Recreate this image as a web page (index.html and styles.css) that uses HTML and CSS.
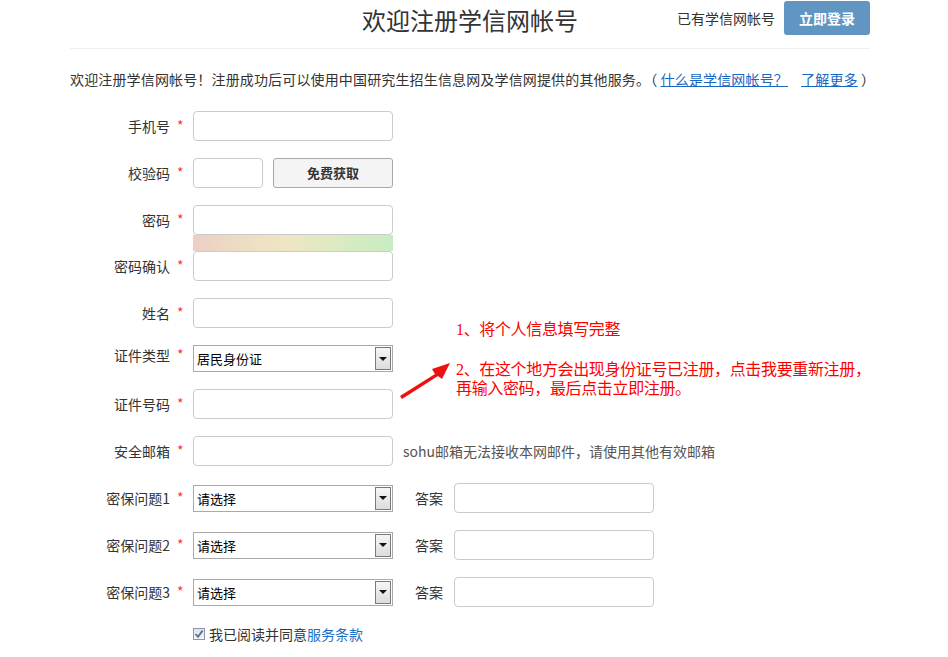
FILE: index.html
```html
<!DOCTYPE html>
<html lang="zh-CN">
<head>
<meta charset="utf-8">
<title>欢迎注册学信网帐号</title>
<link rel="stylesheet" href="styles.css">
</head>
<body>
<div class="page">
  <header class="header">
    <div></div>
    <h1 class="title">欢迎注册学信网帐号</h1>
    <div class="login">
      <span class="has-account">已有学信网帐号</span>
      <a class="login-btn" href="#">立即登录</a>
    </div>
  </header>

  <p class="intro">欢迎注册学信网帐号！注册成功后可以使用中国研究生招生信息网及学信网提供的其他服务。（ <a href="#">什么是学信网帐号？</a>&nbsp;&nbsp;&nbsp; <a href="#">了解更多</a> ）</p>

  <form class="form">
    <div class="row">
      <label class="lbl">手机号</label><span class="star">*</span>
      <span class="input"></span>
    </div>
    <div class="row">
      <label class="lbl">校验码</label><span class="star">*</span>
      <span class="input input-short"></span>
      <span class="btn-code">免费获取</span>
    </div>
    <div class="row row-pwd">
      <label class="lbl">密码</label><span class="star">*</span>
      <span class="input"></span>
    </div>
    <div class="strength-row"><span class="strength"></span></div>
    <div class="row">
      <label class="lbl">密码确认</label><span class="star">*</span>
      <span class="input"></span>
    </div>
    <div class="row">
      <label class="lbl">姓名</label><span class="star">*</span>
      <span class="input"></span>
    </div>
    <div class="row row-select">
      <label class="lbl">证件类型</label><span class="star">*</span>
      <span class="select"><span class="sel-text">居民身份证</span><span class="sel-btn"><i></i></span></span>
    </div>
    <div class="row">
      <label class="lbl">证件号码</label><span class="star">*</span>
      <span class="input"></span>
    </div>
    <div class="row">
      <label class="lbl">安全邮箱</label><span class="star">*</span>
      <span class="input"></span>
      <span class="hint">sohu邮箱无法接收本网邮件，请使用其他有效邮箱</span>
    </div>
    <div class="row">
      <label class="lbl">密保问题1</label><span class="star">*</span>
      <span class="select"><span class="sel-text">请选择</span><span class="sel-btn"><i></i></span></span>
      <span class="answer-lbl">答案</span>
      <span class="input"></span>
    </div>
    <div class="row">
      <label class="lbl">密保问题2</label><span class="star">*</span>
      <span class="select"><span class="sel-text">请选择</span><span class="sel-btn"><i></i></span></span>
      <span class="answer-lbl">答案</span>
      <span class="input"></span>
    </div>
    <div class="row">
      <label class="lbl">密保问题3</label><span class="star">*</span>
      <span class="select"><span class="sel-text">请选择</span><span class="sel-btn"><i></i></span></span>
      <span class="answer-lbl">答案</span>
      <span class="input"></span>
    </div>
    <div class="agree">
      <span class="checkbox"><svg width="10" height="10" viewBox="0 0 10 10"><path d="M1.5 5 L4 7.8 L8.6 1.6" fill="none" stroke="#5a6f94" stroke-width="1.8"/></svg></span>
      <span class="agree-text">我已阅读并同意<a href="#">服务条款</a></span>
    </div>
  </form>

  <div class="note">
    <p>1、将个人信息填写完整</p>
    <p class="note2">2、在这个地方会出现身份证号已注册，点击我要重新注册，<br>再输入密码，最后点击立即注册。</p>
  </div>
  <svg class="arrow" width="60" height="40" viewBox="0 0 60 40">
    <polygon points="1,35 36,13 33,8 51,2 43,18 39,15 3,38" fill="#ee1111"/>
  </svg>
</div>
</body>
</html>
```

FILE: styles.css
```css
html, body {
  margin: 0;
  padding: 0;
  background: #fff;
}
body {
  font-family: "Noto Sans CJK SC", "Noto Sans", sans-serif;
  font-size: 14px;
  color: #333;
}
.page {
  position: relative;
  width: 800px;
  margin-left: 70px;
}
.header {
  display: grid;
  grid-template-columns: 1fr auto 1fr;
  align-items: start;
  height: 48px;
  border-bottom: 1px solid #edf0f4;
}
.title {
  margin: 4px 0 0;
  font-size: 24px;
  font-weight: normal;
  line-height: 32px;
  color: #333;
}
.login {
  justify-self: end;
  display: flex;
  align-items: center;
  margin-top: 1px;
}
.has-account {
  font-size: 14px;
  color: #333;
  margin-right: 9px;
}
.login-btn {
  display: inline-block;
  width: 86px;
  height: 34px;
  line-height: 34px;
  text-align: center;
  background: #6196c3;
  color: #fff;
  font-weight: bold;
  font-size: 14px;
  border-radius: 3px;
  text-decoration: none;
}
.intro {
  margin: 20px 0 0;
  line-height: 20px;
  font-size: 14px;
  color: #333;
  white-space: nowrap;
  letter-spacing: 0.15px;
}
.intro a {
  color: #1768c4;
  text-decoration: underline;
}
.form {
  margin-top: 22px;
}
.row {
  display: flex;
  align-items: center;
  height: 30px;
  margin-bottom: 17px;
}
.row-pwd {
  margin-bottom: 0;
}
.row-select {
  height: 27px;
  align-items: flex-start;
}
.lbl {
  width: 100px;
  text-align: right;
  color: #333;
  line-height: 20px;
}
.star {
  width: 16px;
  padding-left: 7px;
  color: #f33;
  line-height: 20px;
  position: relative;
  top: -1px;
}
.input {
  box-sizing: border-box;
  display: block;
  width: 200px;
  height: 30px;
  border: 1px solid #cbcbcb;
  border-radius: 4px;
  background: #fff;
}
.input-short {
  width: 70px;
}
.btn-code {
  box-sizing: border-box;
  width: 120px;
  height: 30px;
  margin-left: 10px;
  border: 1px solid #a8a8a8;
  border-radius: 3px;
  background: #f4f4f4;
  text-align: center;
  line-height: 28px;
  font-size: 13px;
  font-weight: bold;
  color: #333;
}
.strength-row {
  display: flex;
  padding-left: 123px;
}
.strength {
  display: block;
  width: 200px;
  height: 16px;
  background: linear-gradient(100deg, #ebcfc3 0%, #eddfc3 30%, #ede6c3 48%, #d8ebc2 75%, #c7ecc0 100%);
}
.select {
  box-sizing: border-box;
  display: flex;
  align-items: center;
  justify-content: space-between;
  width: 200px;
  height: 27px;
  border: 1px solid #a9a9a9;
  background: #fff;
  padding: 0 1px 0 3px;
}
.sel-text {
  font-size: 13px;
  color: #000;
}
.sel-btn {
  box-sizing: border-box;
  display: flex;
  align-items: center;
  justify-content: center;
  width: 16px;
  height: 23px;
  border: 1px solid #7a7a7a;
  background: linear-gradient(#f6f6f6, #dcdcdc);
}
.sel-btn i {
  display: block;
  width: 0;
  height: 0;
  border-left: 4px solid transparent;
  border-right: 4px solid transparent;
  border-top: 4px solid #111;
}
.answer-lbl {
  margin-left: 22px;
  margin-right: 11px;
  color: #333;
}
.hint {
  margin-left: 10px;
  color: #555;
}
.agree {
  display: flex;
  align-items: center;
  margin-top: 11px;
  padding-left: 123px;
  height: 20px;
}
.checkbox {
  box-sizing: border-box;
  display: flex;
  align-items: center;
  justify-content: center;
  width: 12px;
  height: 12px;
  border: 1px solid #8a98b3;
  background: linear-gradient(#dfe3ea, #f4f5f7);
  margin-right: 4px;
}
.agree-text {
  color: #333;
  font-size: 14px;
}
.agree-text a {
  color: #1a6fc6;
  text-decoration: none;
}
.note {
  position: absolute;
  left: 386px;
  top: 321px;
  color: #f00;
  font-family: "Liberation Serif", "Noto Sans CJK SC", serif;
  font-size: 16px;
  line-height: 18.5px;
  white-space: nowrap;
  letter-spacing: -0.35px;
}
.note p {
  margin: 0;
}
.note .note2 {
  margin-top: 21.5px;
}
.arrow {
  position: absolute;
  left: 329px;
  top: 361px;
}
```
